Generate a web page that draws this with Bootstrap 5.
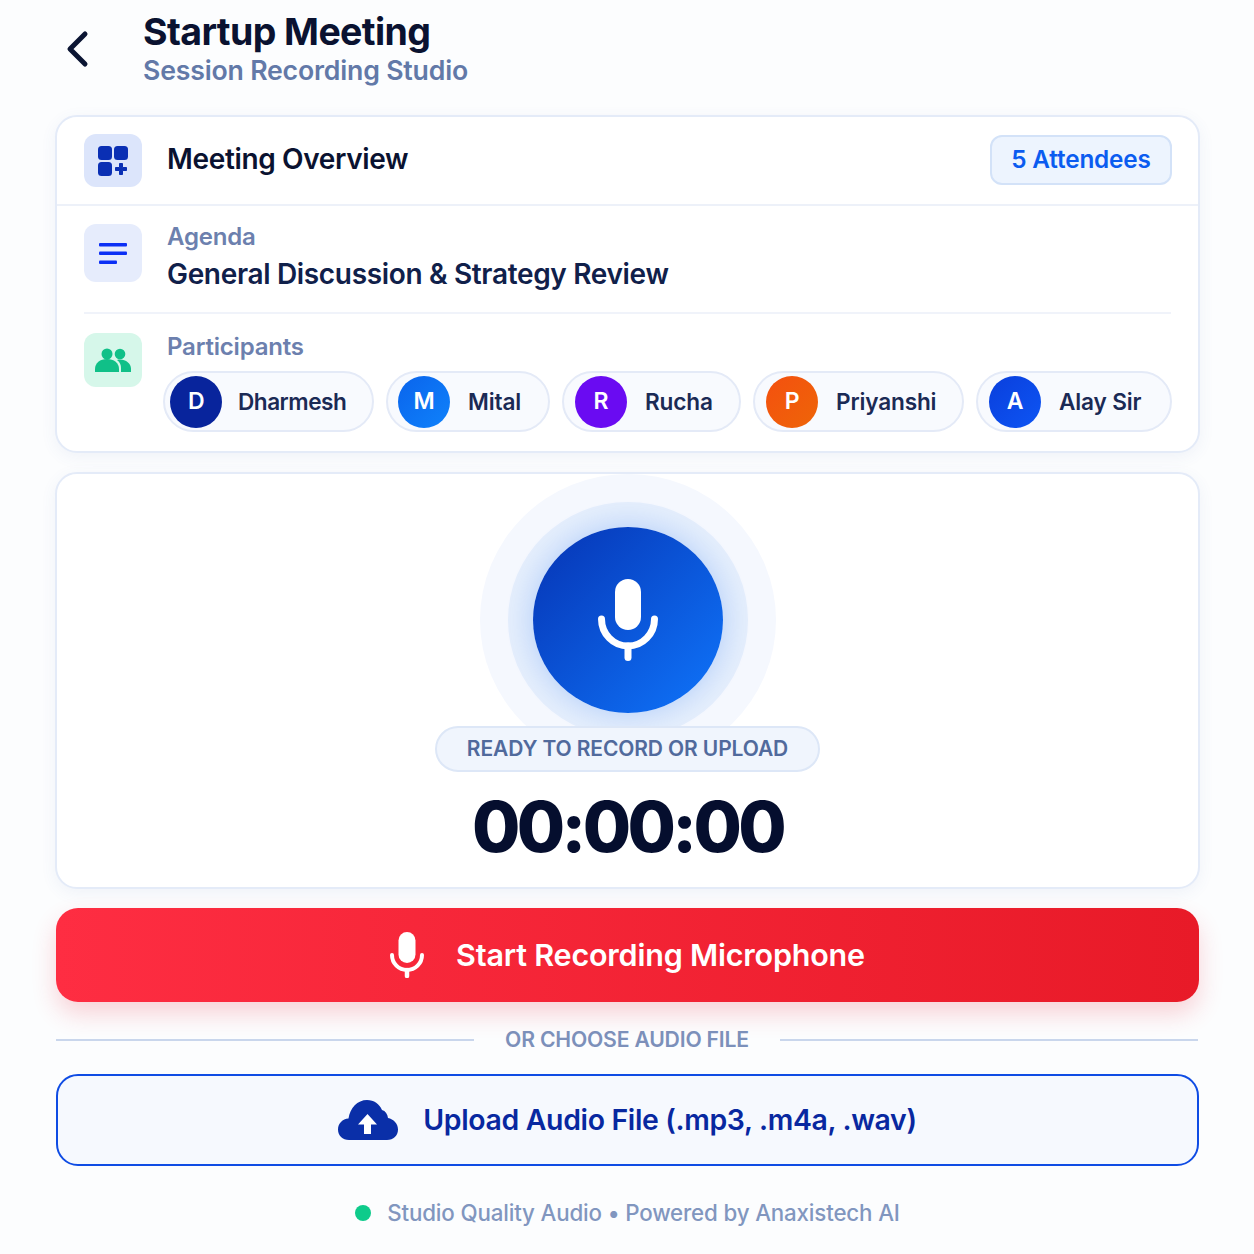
<!DOCTYPE html>
<html lang="en">
<head>
<meta charset="utf-8">
<meta name="viewport" content="width=device-width, initial-scale=1.0">
<title>Startup Meeting</title>
<link href="https://cdn.jsdelivr.net/npm/bootstrap@5.3.1/dist/css/bootstrap.min.css" rel="stylesheet">
<style>
body { font-family: Inter, "Liberation Sans", sans-serif; background: #fcfdfe; color: #0b1533; }
.studio-page { width: 1254px; height: 1254px; padding: 0 54px 0 55px; overflow: hidden; }
.top-head { height: 115px; padding-top: 10px; }
.back-link { width: 88px; padding-left: 8px; padding-top: 18px; color: #0b1533; }
.page-title { font-size: 37.5px; font-weight: 700; line-height: 43px; letter-spacing: -.6px; margin: 0; color: #0a1230; }
.page-sub { font-size: 26.7px; font-weight: 600; line-height: 33px; margin-top: 1px; color: #6279a8; letter-spacing: -.2px; }
.panel { background: #fff; border: 2px solid #e4ebf8; border-radius: 22px; box-shadow: 0 4px 16px rgba(70,100,170,.07); }
.overview-head { height: 89px; padding: 0 26px 0 27px; border-bottom: 2px solid #edf1f9; }
.tile { width: 58px; flex: none; border-radius: 12px; display: flex; align-items: center; justify-content: center; }
.tile-head { height: 53px; background: #dce5fb; margin-right: 25px; }
.tile-agenda { height: 58px; background: #e6ecfc; margin-right: 25px; }
.tile-people { height: 54px; background: #d6f7ea; margin-right: 21px; }
.overview-title { font-size: 28px; font-weight: 600; letter-spacing: -.35px; color: #0a1230; padding-bottom: 3px; }
.count-tag { width: 182px; height: 50px; margin-bottom: 2px; border-radius: 12px; background: #edf4fe; border: 2px solid #d3e2f8; color: #0b5cf0; font-size: 24.3px; font-weight: 600; display: flex; align-items: center; justify-content: center; letter-spacing: -.15px; }
.agenda-row { margin: 0 27px; padding: 18px 0 13px; border-bottom: 2px solid #f0f3fa; }
.field-label { font-size: 24px; font-weight: 600; line-height: 27px; color: #6c80ae; letter-spacing: -.2px; }
.agenda-label { margin-top: -1px; }
.agenda-text { font-size: 28px; font-weight: 600; line-height: 49px; color: #10204a; letter-spacing: -.33px; }
.people-row { padding: 19px 26px 0 27px; height: 137px; }
.people-label { padding-left: 4px; height: 38px; }
.chip-row { display: flex; justify-content: space-between; }
.chip { height: 61px; border: 2px solid #e4eaf7; background: #f8fafe; border-radius: 31px; display: flex; align-items: center; padding-left: 11px; font-size: 22.6px; font-weight: 600; color: #1b2a55; letter-spacing: -.15px; }
.chip-a { width: 211px; padding-left: 5px; letter-spacing: -.5px; } .chip-b { width: 164px; padding-left: 10px; } .chip-c { width: 179px; } .chip-d { width: 211px; } .chip-e { width: 196px; }
.avatar { width: 52px; height: 52px; border-radius: 50%; flex: none; color: #fff; font-size: 23px; font-weight: 600; display: flex; align-items: center; justify-content: center; margin-right: 18px; }
.chip-a .avatar { margin-right: 16px; }
.av-navy { background: #08249c; } .av-blue { background: linear-gradient(135deg, #0a64ec, #0f82fb); } .av-purple { background: #6a0bf2; } .av-orange { background: linear-gradient(135deg, #f4500f, #ee6508); } .av-royal { background: linear-gradient(135deg, #0a3fdc, #0d55f4); }
.record-panel { height: 417px; margin-top: 19px; overflow: hidden; padding-top: 53px; }
.mic-disc { width: 190px; height: 186px; flex: none; border-radius: 50%; background: linear-gradient(135deg, #0634b4, #0f75fb); box-shadow: 0 0 22px 6px rgba(20,100,240,.16), 0 0 0 25px #e4eefc, 0 0 0 53px #f5f8fe; display: flex; align-items: center; justify-content: center; }
.ready-pill { position: relative; width: 385px; height: 46px; flex: none; margin-top: 13px; border-radius: 23px; background: #f0f5fd; border: 2px solid #dde7f7; color: #516a9c; font-size: 21px; font-weight: 600; letter-spacing: -.12px; display: flex; align-items: center; justify-content: center; }
.clock-text { font-size: 70px; font-weight: 800; line-height: 82px; margin-top: 14px; color: #050e2e; letter-spacing: -3.6px; }
.record-btn { width: 1143px; height: 94px; margin: 19px 0 0 1px; border: 0; border-radius: 22px; background: linear-gradient(90deg, #fe2d42, #e81a28); box-shadow: 0 12px 24px rgba(235,40,60,.2); color: #fff; font-size: 30.5px; font-weight: 600; letter-spacing: -.2px; display: flex; align-items: center; justify-content: center; gap: 32px; }
.or-row { height: 72px; padding-top: 4px; margin: 0 2px 0 1px; display: flex; align-items: center; gap: 31px; color: #7c90ba; font-size: 21.2px; font-weight: 600; letter-spacing: -.2px; }
.or-line { flex: 1; height: 2px; background: #c9d6ec; }
.upload-btn { width: 1143px; height: 92px; margin-left: 1px; border: 2px solid #0f4ce4; border-radius: 22px; background: #f6f9fe; color: #0828a0; font-size: 28.4px; font-weight: 600; letter-spacing: -.33px; display: flex; align-items: center; justify-content: center; gap: 25px; }
.foot-note { margin-top: 32px; color: #8196bf; font-size: 22.3px; font-weight: 500; letter-spacing: -.15px; display: flex; align-items: center; justify-content: center; gap: 16px; line-height: 30px; }
.live-dot { width: 16px; height: 16px; border-radius: 50%; background: #0ecb8b; }
</style>
</head>
<body>
<div class="studio-page">
    <div class="top-head d-flex">
        <div class="back-link">
            <svg width="30" height="42" viewBox="0 0 30 42"><path d="M22 6 L7 21 L22 36" fill="none" stroke="currentColor" stroke-width="5" stroke-linecap="round" stroke-linejoin="round"/></svg>
        </div>
        <div>
            <h1 class="page-title">Startup Meeting</h1>
            <div class="page-sub">Session Recording Studio</div>
        </div>
    </div>

    <div class="panel">
        <div class="overview-head d-flex align-items-center">
            <div class="tile tile-head">
                <svg width="32" height="32" viewBox="0 0 32 32" fill="#0a2fb4">
                    <rect x="1" y="1" width="14" height="14" rx="3.5"/>
                    <rect x="17" y="1" width="14" height="14" rx="3.5"/>
                    <rect x="1" y="17" width="14" height="14" rx="3.5"/>
                    <path d="M22.500 18.500h3v4h4v3h-4v4h-3v-4h-4v-3h4z" stroke="#0a2fb4" stroke-linejoin="round"/>
                </svg>
            </div>
            <div class="overview-title flex-grow-1">Meeting Overview</div>
            <div class="count-tag">5 Attendees</div>
        </div>

        <div class="agenda-row d-flex">
            <div class="tile tile-agenda">
                <svg width="28" height="21" viewBox="0 0 28 21" fill="#0b2ff5">
                    <rect width="28" height="3.500" rx="1" y="0"/>
                    <rect width="28" height="3.500" rx="1" y="8.500"/>
                    <rect width="18" height="3.500" rx="1" y="17.500"/>
                </svg>
            </div>
            <div>
                <div class="field-label agenda-label">Agenda</div>
                <div class="agenda-text">General Discussion &amp; Strategy Review</div>
            </div>
        </div>

        <div class="people-row d-flex">
            <div class="tile tile-people">
                <svg width="36" height="24" viewBox="0 0 36 24" fill="#10c088">
                    <circle cx="12" cy="6" r="5.500"/>
                    <circle cx="25" cy="6" r="5.300"/>
                    <path d="M0 24v-3c0-6 5-10 12-10s12 4 12 10v3z"/>
                    <path d="M26 24v-4c0-3-1-6-4-8 1-.5 2-.5 3-.5 6 0 11 4 11 9v3.500z"/>
                </svg>
            </div>
            <div class="flex-grow-1">
                <div class="field-label people-label">Participants</div>
                <div class="chip-row">
                    <div class="chip chip-a"><span class="avatar av-navy">D</span>Dharmesh</div>
                    <div class="chip chip-b"><span class="avatar av-blue">M</span>Mital</div>
                    <div class="chip chip-c"><span class="avatar av-purple">R</span>Rucha</div>
                    <div class="chip chip-d"><span class="avatar av-orange">P</span>Priyanshi</div>
                    <div class="chip chip-e"><span class="avatar av-royal">A</span>Alay Sir</div>
                </div>
            </div>
        </div>
    </div>

    <div class="panel record-panel d-flex flex-column align-items-center">
        <div class="mic-disc">
            <svg width="60" height="82" viewBox="0 0 60 82">
                <rect x="17" y="0" width="26" height="51" rx="13" fill="#fff"/>
                <path d="M3.500 40c0 15 12 27 26.500 27s26.500-12 26.500-27" fill="none" stroke="#fff" stroke-width="7" stroke-linecap="round"/>
                <path d="M30 67v11.500" stroke="#fff" stroke-width="7" stroke-linecap="round"/>
            </svg>
        </div>
        <div class="ready-pill">READY TO RECORD OR UPLOAD</div>
        <div class="clock-text">00:00:00</div>
    </div>

    <button class="record-btn" type="button">
        <svg width="34" height="46" viewBox="0 0 34 46">
            <rect x="8.500" y="0" width="17" height="31" rx="8.500" fill="#fff"/>
            <path d="M2 23c0 8.500 6.700 15 15 15s15-6.500 15-15" fill="none" stroke="#fff" stroke-width="4" stroke-linecap="round"/>
            <path d="M17 38v6" stroke="#fff" stroke-width="4.500" stroke-linecap="round"/>
        </svg>
        Start Recording Microphone
    </button>

    <div class="or-row">
        <div class="or-line"></div>
        <div>OR CHOOSE AUDIO FILE</div>
        <div class="or-line"></div>
    </div>

    <button class="upload-btn" type="button">
        <svg width="60" height="40" viewBox="0 0 60 40">
            <path d="M11 40C4.500 40 0 35.500 0 29.500 0 23.500 4.500 19 10.500 18.500 12 8 19.500 0 29 0 36 0 41.500 4 44 10 47.500 11 49.500 14 50 18 55.500 19 60 23.500 60 29.500 60 35.500 55.500 40 49 40z" fill="#0a2fa8"/>
            <path d="M29.500 14 20 24.500h6V34h7v-9.500h6z" fill="#fff"/>
        </svg>
        Upload Audio File (.mp3, .m4a, .wav)
    </button>

    <div class="foot-note"><span class="live-dot"></span><span>Studio Quality Audio • Powered by Anaxistech AI</span></div>
</div>
<script src="https://cdn.jsdelivr.net/npm/bootstrap@5.3.1/dist/js/bootstrap.bundle.min.js"></script>
</body>
</html>
